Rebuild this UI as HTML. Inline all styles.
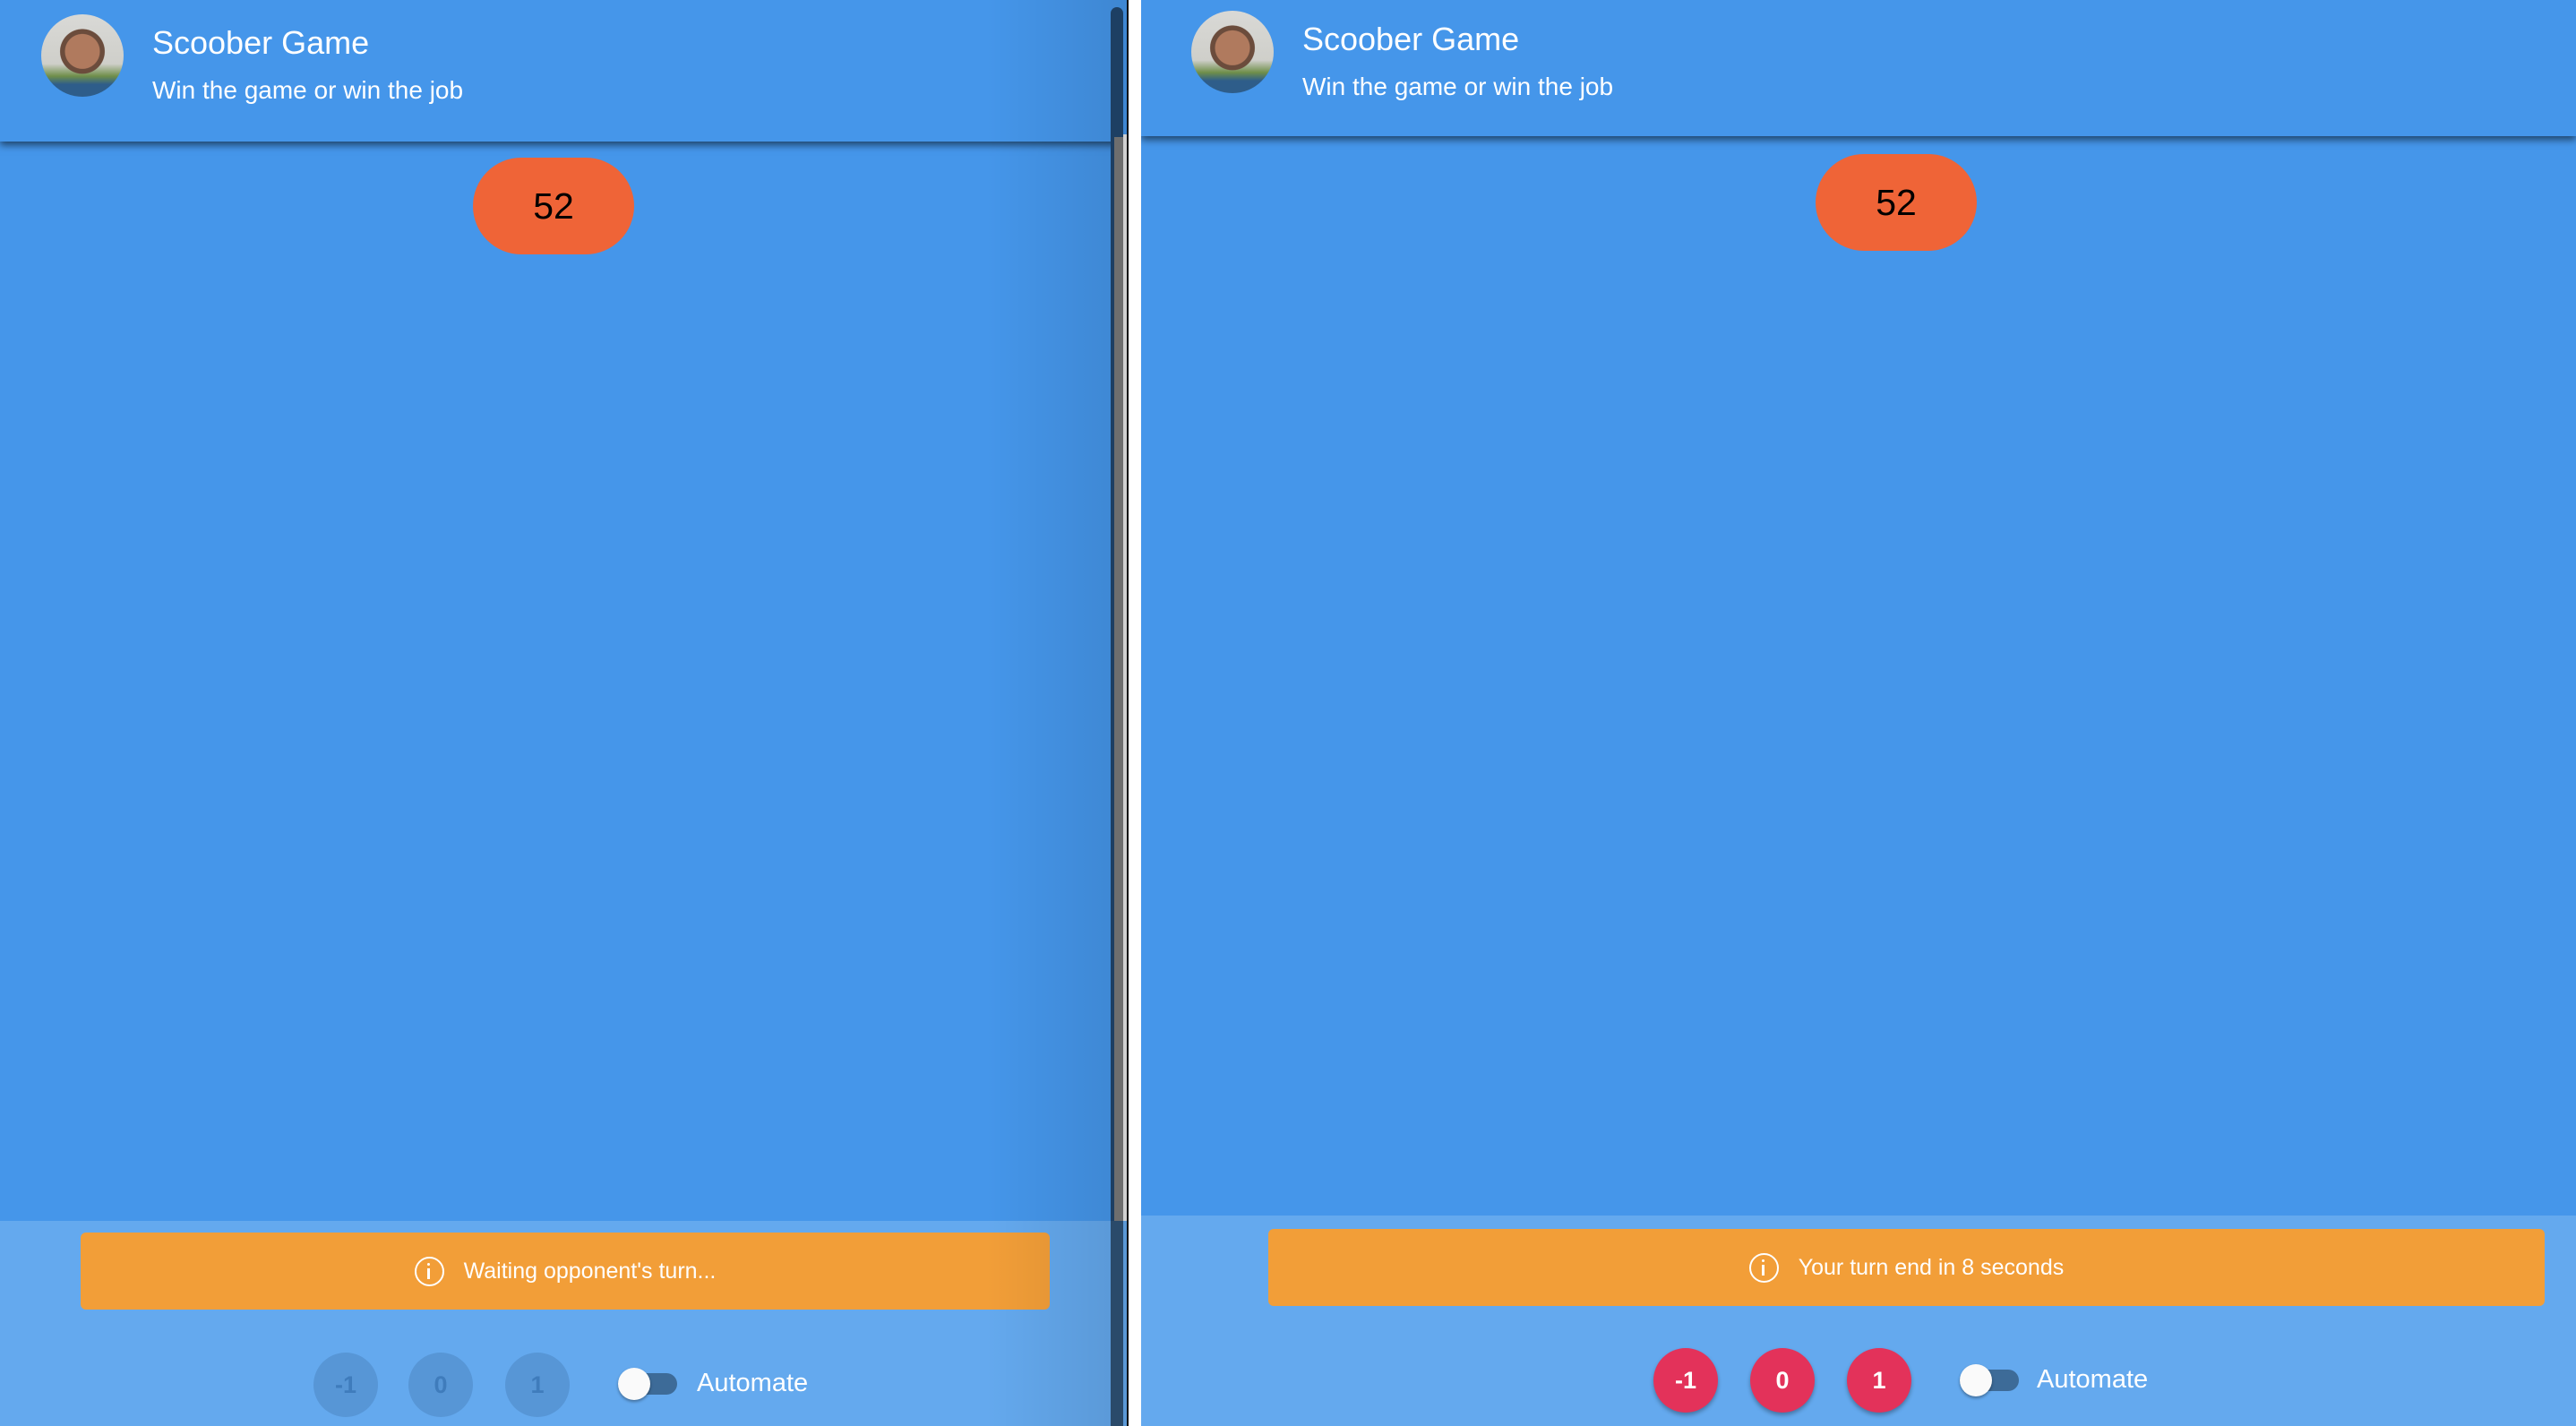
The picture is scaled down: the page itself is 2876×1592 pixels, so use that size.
<!DOCTYPE html>
<html><head><meta charset="utf-8"><style>
*{margin:0;padding:0;box-sizing:border-box}
body{width:2876px;height:1592px;position:relative;overflow:hidden;background:#111;font-family:"Liberation Sans",sans-serif}
.abs{position:absolute}
.panel{position:absolute;top:0;height:1592px;background:#4596EA;overflow:hidden}
.hdr{position:absolute;left:0;right:0;top:0;background:#4596EA;box-shadow:0 4px 8px rgba(0,0,0,.55)}
.av{position:absolute;width:92px;height:92px;border-radius:50%;background:radial-gradient(circle at 50% 45%,#b07a5e 0 28%,#6b4c3c 29% 36%,transparent 37%),linear-gradient(#d9d9d6,#cfcfca 60%,#6f8f4a 75%,#2e5d8a 85%)}
.t1{position:absolute;color:#fff;font-size:36px}
.t2{position:absolute;color:#fff;font-size:28px}
.pill{position:absolute;width:180px;height:108px;border-radius:54px;background:#EF6437;color:#000;font-size:41px;text-align:center;line-height:108px}
.foot{position:absolute;left:0;right:0;bottom:0;background:#64A9EE}
.alert{position:absolute;height:86px;background:#F29E38;border-radius:6px;color:#fff;font-size:25px;display:flex;align-items:center;justify-content:center}
.ic{width:33px;height:33px;border:2.5px solid #fff;border-radius:50%;margin-right:22px;position:relative}
.ic:before{content:"";position:absolute;left:12.5px;top:5px;width:3px;height:3px;background:#fff;border-radius:50%}
.ic:after{content:"";position:absolute;left:12.5px;top:11px;width:3px;height:12px;background:#fff}
.btn{position:absolute;width:72px;height:72px;border-radius:50%;text-align:center;line-height:72px;font-size:27px;font-weight:bold}
.dis{background:#5796D6;color:#3F7CBC}
.red{background:#E3325A;color:#fff;box-shadow:0 3px 5px rgba(0,0,0,.3)}
.track{position:absolute;width:66px;height:24px;border-radius:12px;background:#3D6B98}
.knob{position:absolute;width:36px;height:36px;border-radius:50%;background:#fafafa;box-shadow:0 2px 3px rgba(0,0,0,.35)}
.auto{position:absolute;color:#fff;font-size:29px}
</style></head><body>
<div class="panel" style="left:0;width:1258px">
  <div class="foot" style="top:1363px"></div>
  <div class="hdr" style="height:158px">
    <div class="av" style="left:46px;top:16px"></div>
    <div class="t1" style="left:170px;top:27px">Scoober Game</div>
    <div class="t2" style="left:170px;top:85px">Win the game or win the job</div>
  </div>
  <div class="pill" style="left:528px;top:176px">52</div>
  <div class="alert" style="left:90px;top:1376px;width:1082px"><span class="ic"></span>Waiting opponent's turn...</div>
  <div class="btn dis" style="left:350px;top:1510px">-1</div>
  <div class="btn dis" style="left:456px;top:1510px">0</div>
  <div class="btn dis" style="left:564px;top:1510px">1</div>
  <div class="track" style="left:690px;top:1533px"></div>
  <div class="knob" style="left:690px;top:1527px"></div>
  <div class="auto" style="left:778px;top:1528px">Automate</div>
  <div class="abs" style="left:1100px;top:0;width:158px;height:1592px;background:linear-gradient(90deg,rgba(0,0,0,0),rgba(0,0,0,.1))"></div>
  <div class="abs" style="left:1254px;top:150px;width:4px;height:1213px;background:#d0d0d0"></div>
  <div class="abs" style="left:1244px;top:150px;width:10px;height:1213px;background:#6e6e6e"></div>
  <div class="abs" style="left:1240px;top:8px;width:14px;height:145px;background:#1d3f63;border-radius:7px 7px 0 0"></div>
  <div class="abs" style="left:1240px;top:150px;width:4px;height:1213px;background:#1d3f63"></div>
  <div class="abs" style="left:1240px;top:1363px;width:14px;height:229px;background:#2a4a6a"></div>
</div>
<div class="abs" style="left:1258px;top:0;width:2px;height:1592px;background:#111"></div>
<div class="abs" style="left:1260px;top:0;width:14px;height:1592px;background:#fff"></div>
<div class="panel" style="left:1274px;width:1602px">
  <div class="foot" style="top:1357px"></div>
  <div class="hdr" style="height:152px">
    <div class="av" style="left:56px;top:12px"></div>
    <div class="t1" style="left:180px;top:23px">Scoober Game</div>
    <div class="t2" style="left:180px;top:81px">Win the game or win the job</div>
  </div>
  <div class="pill" style="left:753px;top:172px">52</div>
  <div class="alert" style="left:142px;top:1372px;width:1425px"><span class="ic"></span>Your turn end in 8 seconds</div>
  <div class="btn red" style="left:572px;top:1505px">-1</div>
  <div class="btn red" style="left:680px;top:1505px">0</div>
  <div class="btn red" style="left:788px;top:1505px">1</div>
  <div class="track" style="left:914px;top:1529px"></div>
  <div class="knob" style="left:914px;top:1523px"></div>
  <div class="auto" style="left:1000px;top:1524px">Automate</div>
</div>
</body></html>
